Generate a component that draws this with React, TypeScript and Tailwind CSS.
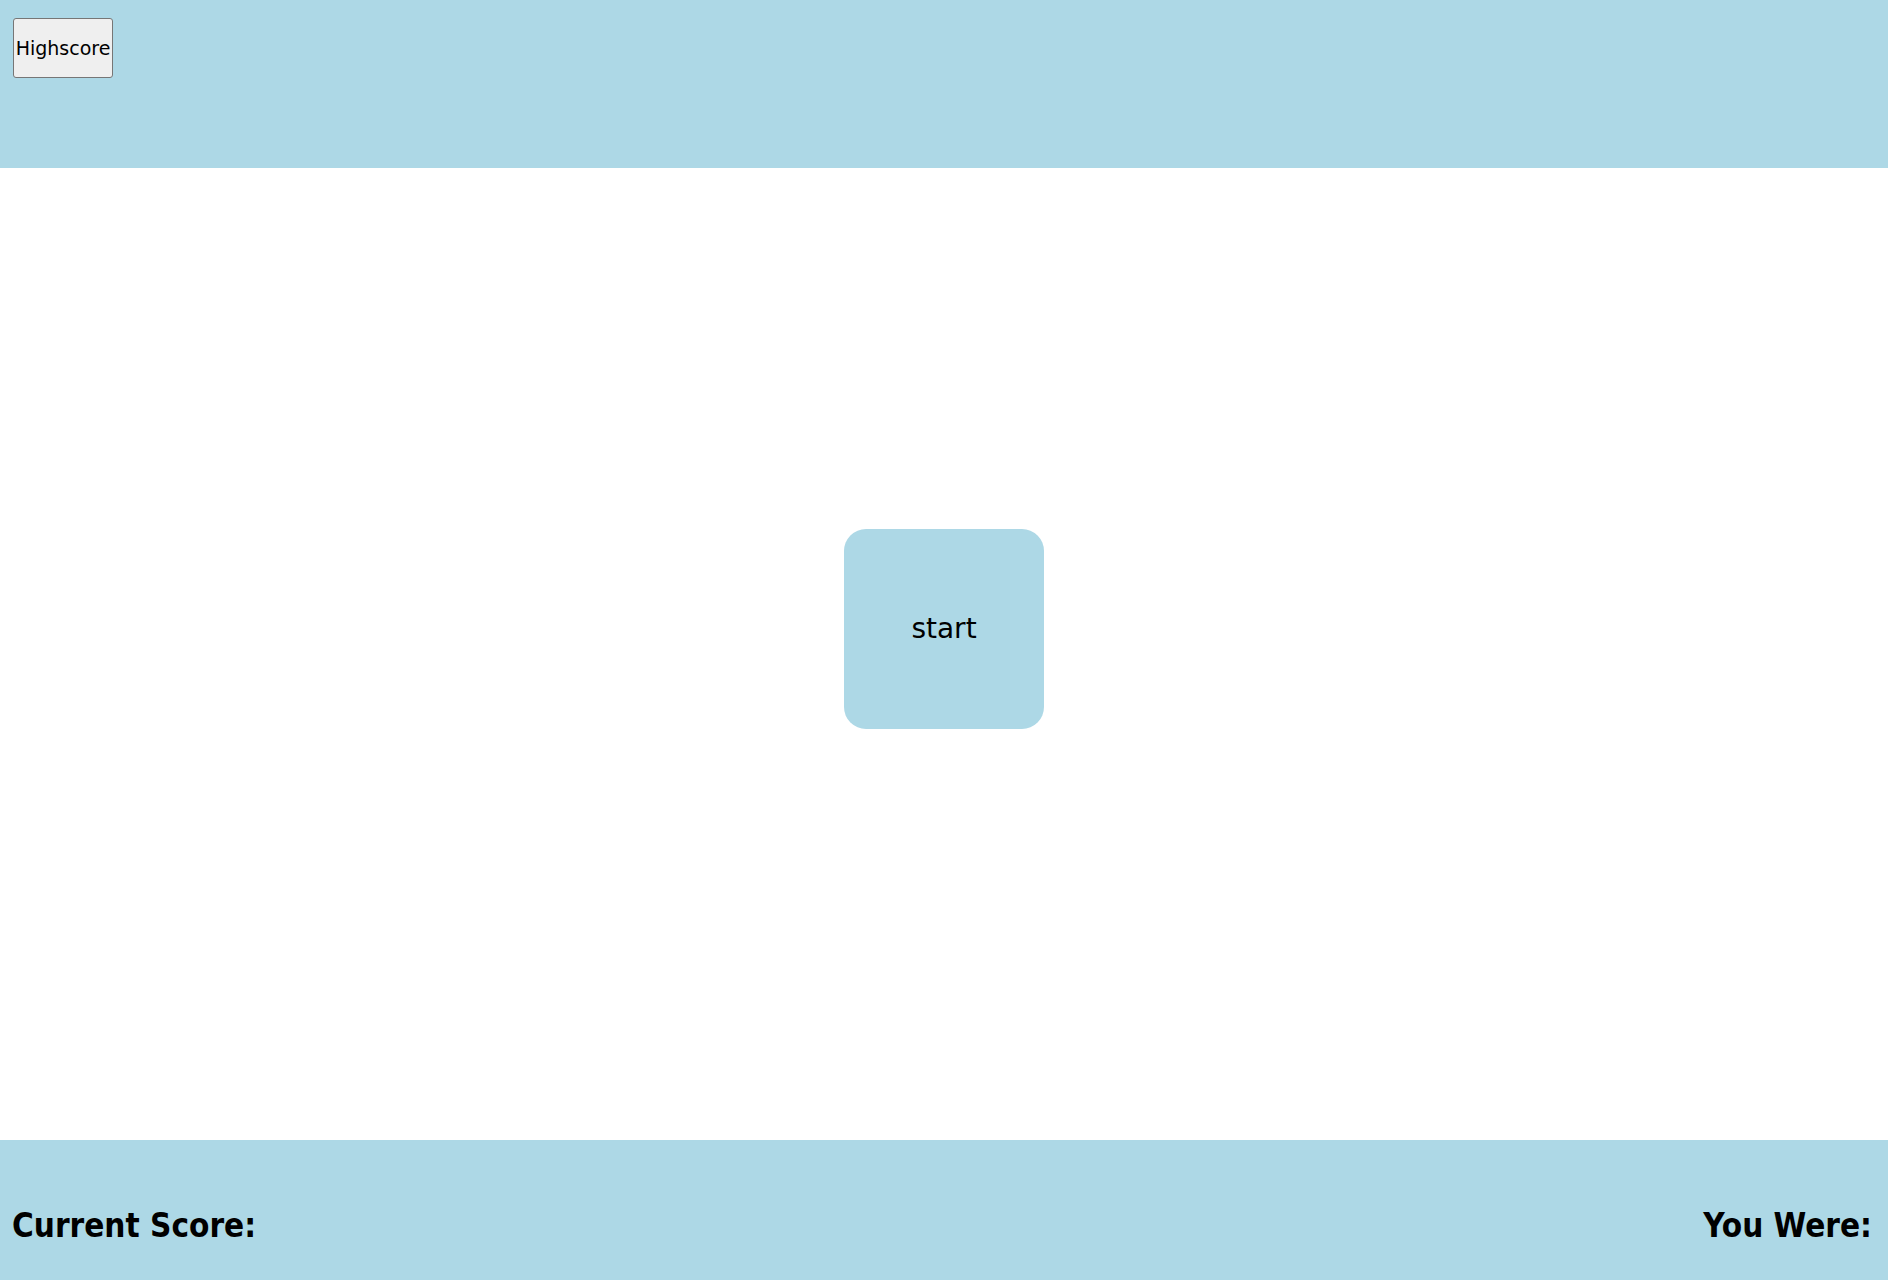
export default function App() {
  return (
    <div className="flex h-screen w-full flex-col bg-white font-['DejaVu_Sans',sans-serif] text-black">
      <header className="h-[168px] shrink-0 bg-[#add8e6] pl-[13px] pt-[18px]">
        <button className="flex h-[60px] w-[100px] items-center justify-center rounded-[3px] border border-[#767676] bg-[#efefef] text-[19px] leading-none">
          Highscore
        </button>
      </header>

      <main className="flex flex-1 justify-center pt-[361px]">
        <button className="flex h-[200px] w-[200px] items-center justify-center rounded-[22px] bg-[#add8e6] text-[28px]">
          start
        </button>
      </main>

      <footer className="flex h-[140px] shrink-0 items-center justify-between bg-[#add8e6] pl-[12px] pr-[16px] pt-[30px]">
        <h2 className="font-['DejaVu_Sans_Condensed','DejaVu_Sans',sans-serif] text-[33px] font-bold leading-none">
          Current Score:
        </h2>
        <h2 className="font-['DejaVu_Sans_Condensed','DejaVu_Sans',sans-serif] text-[33px] font-bold leading-none">
          You Were:
        </h2>
      </footer>
    </div>
  );
}
